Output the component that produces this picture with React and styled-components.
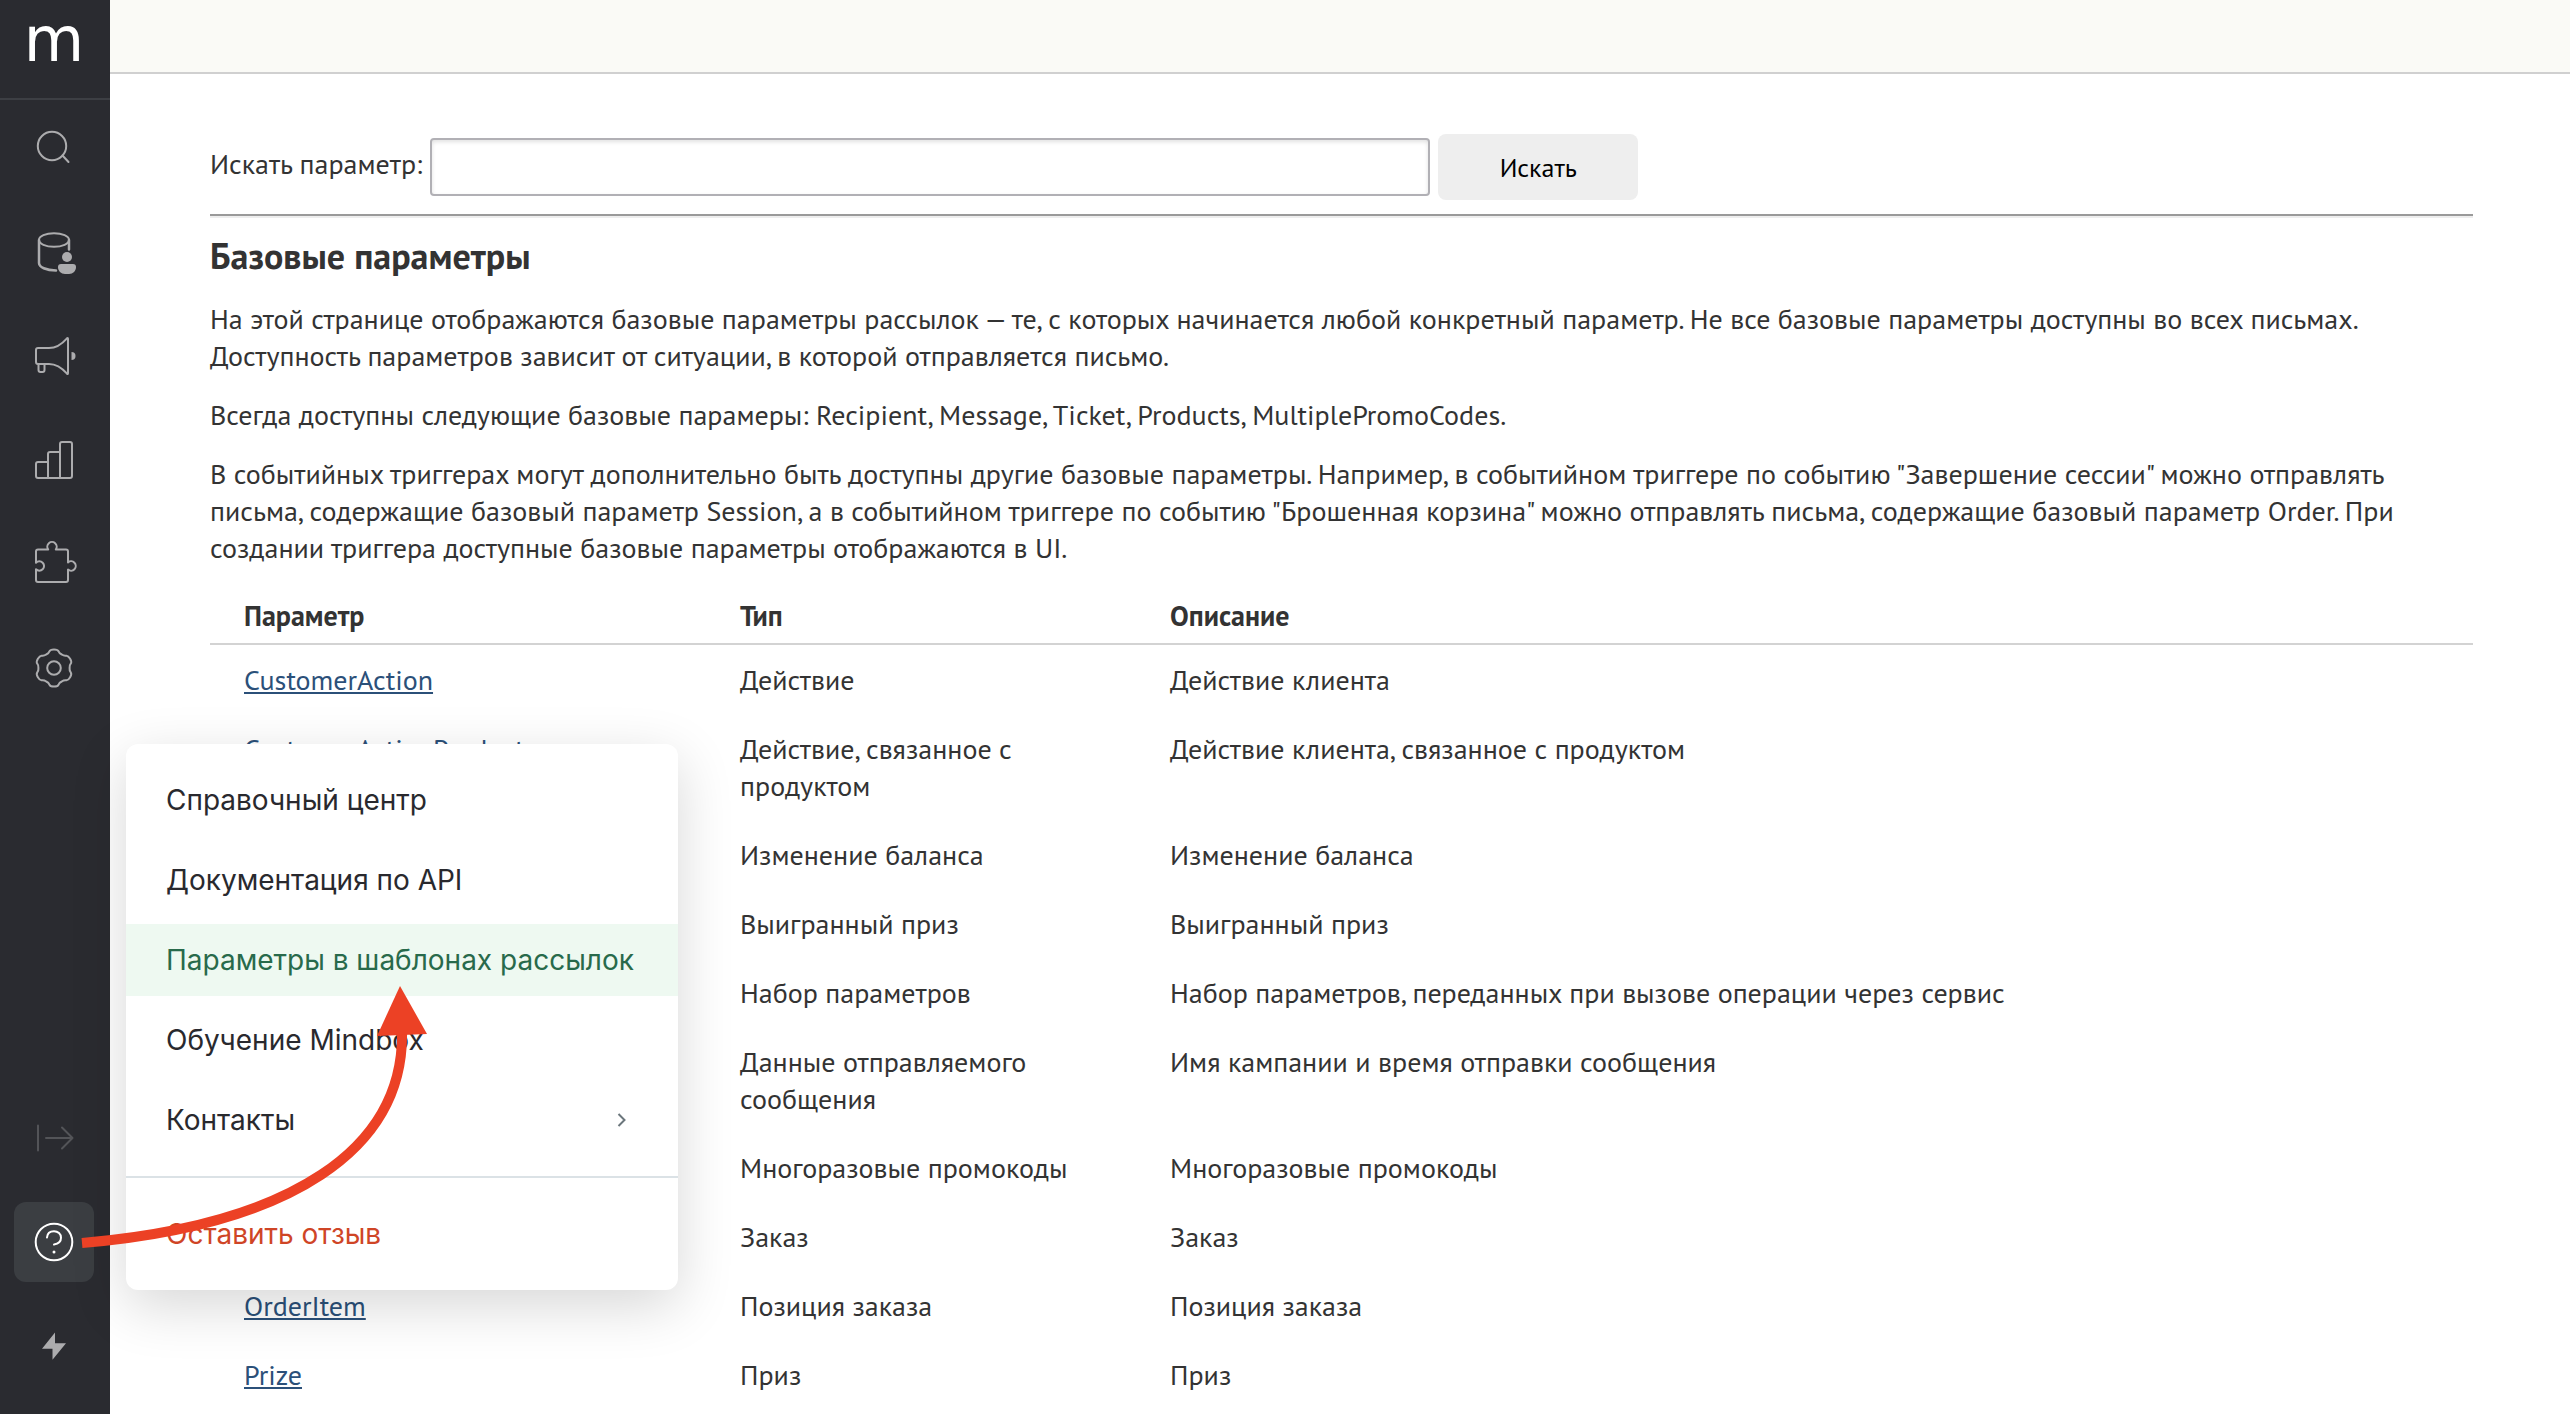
import React from 'react';
import { useState } from 'react';
import styled, { createGlobalStyle } from 'styled-components';

const GlobalStyle = createGlobalStyle`
    :root {
        --sidebar: #2a2b30;
        --sidebar-line: #3d3f44;
        --icon: #acacae;
        --text: #333;
        --menu-text: #29292e;
        --link: #2b5079;
        --pt: 'PT Sans', 'Noto Sans', sans-serif;
        --inter: Inter, 'Noto Sans', sans-serif;
    }

    *, *::before, *::after {
        box-sizing: border-box;
    }

    body {
        margin: 0;
        background: #fff;
        color: var(--text);
        font-family: var(--pt);
        font-size: 28px;
        line-height: 37px;
    }
`;

const StyledPage = styled.div`
    display: flex;
    align-items: flex-start;
    min-height: 100vh;
`;

const StyledSidebar = styled.aside`
    position: sticky;
    top: 0;
    z-index: 10;
    flex: none;
    display: flex;
    flex-direction: column;
    width: 110px;
    height: 100vh;
    background: var(--sidebar);
`;

const Logo = styled.a`
    height: 100px;
    padding-right: 2px;
    border-bottom: 2px solid var(--sidebar-line);
    color: #fff;
    font-family: 'DejaVu Sans', sans-serif;
    font-size: 62px;
    line-height: 79px;
    text-align: center;
    text-decoration: none;
`;

const NavGroup = styled.nav`
    display: flex;
    flex-direction: column;
    gap: 24px;
    padding: 8px 14px;

    &:last-of-type {
        margin-top: auto;
        padding-bottom: 28px;
    }
`;

const NavButton = styled.button`
    width: 80px;
    height: 80px;
    padding: 0;
    border: none;
    border-radius: 12px;
    background: ${({ $active }) => ($active ? '#3b3e42' : 'transparent')};
    color: ${({ $active, $dim }) => ($active ? '#fff' : $dim ? '#535458' : 'var(--icon)')};
    cursor: pointer;

    svg {
        display: block;
        width: 80px;
        height: 80px;
        fill: none;
        stroke: currentColor;
        stroke-width: 2;
        stroke-linejoin: round;
        stroke-linecap: round;
    }

    .solid {
        fill: currentColor;
        stroke: none;
    }
`;

const StyledMenu = styled.div`
    position: absolute;
    left: 126px;
    bottom: 124px;
    display: flex;
    flex-direction: column;
    gap: 8px;
    width: 552px;
    padding: 20px 0;
    border-radius: 12px;
    background: #fff;
    box-shadow: 0 16px 56px rgba(0, 0, 0, 0.16);

    hr {
        width: 100%;
        height: 2px;
        margin: 12px 0;
        border: none;
        background: #dbe2e6;
    }
`;

const MenuItem = styled.a`
    display: flex;
    align-items: center;
    justify-content: space-between;
    height: 72px;
    padding: 0 48px 0 40px;
    border: none;
    background: ${({ $active }) => ($active ? '#eef9f1' : 'transparent')};
    color: ${({ $active, $danger }) => ($active ? '#286a4b' : $danger ? '#cf4526' : 'var(--menu-text)')};
    font-family: var(--inter);
    font-size: 28px;
    text-align: left;
    text-decoration: none;
    white-space: nowrap;
    cursor: pointer;

    svg {
        width: 16px;
        height: 16px;
        fill: none;
        stroke: #6b767c;
        stroke-width: 2;
    }
`;

const Pointer = styled.svg`
    position: absolute;
    left: 80px;
    bottom: 154px;
    width: 360px;
    height: 280px;
    pointer-events: none;
`;

const StyledMain = styled.main`
    flex: 1;
    min-width: 0;
`;

const TopBar = styled.header`
    height: 74px;
    border-bottom: 2px solid #d0d0d0;
    background: #fafaf6;
`;

const Content = styled.div`
    padding: 60px 97px 0 100px;

    p {
        margin: 22px 0;
    }

    h1 {
        margin: 16px 0 22px;
        font-size: 36px;
        line-height: 44px;
    }
`;

const SearchForm = styled.form`
    display: flex;
    align-items: center;
    gap: 8px;

    label {
        padding-bottom: 8px;
    }

    input {
        flex: 0 1 1000px;
        min-width: 0;
        height: 58px;
        padding: 0 12px;
        border: 2px solid #b1b0b5;
        border-radius: 4px;
        box-shadow: inset 0 2px 4px rgba(0, 0, 0, 0.12);
        font: inherit;
    }

    button {
        width: 200px;
        height: 66px;
        border: none;
        border-radius: 8px;
        background: #eee;
        color: #000;
        font-family: var(--pt);
        font-size: 26px;
        cursor: pointer;
    }
`;

const Divider = styled.hr`
    height: 4px;
    margin: 14px 0 0;
    border: none;
    border-top: 2px solid #9a9a9a;
    background: #eee;
`;

const ParamTable = styled.table`
    width: 100%;
    border-collapse: collapse;
    table-layout: fixed;

    th {
        padding: 9px 34px;
        border-bottom: 2px solid #d3d3d3;
        text-align: left;
    }

    td {
        padding: 16px 34px;
        vertical-align: top;
    }

    a {
        color: var(--link);
    }

    .name {
        width: 496px;
    }

    .type {
        width: 430px;
    }
`;

// six-lobed gear outline around (40, 40)
const gearPath = () => {
    const at = (deg, r, shift) => {
        const a = (deg * Math.PI) / 180;
        const x = 40 + r * Math.cos(a) - shift * Math.sin(a);
        const y = 40 + r * Math.sin(a) + shift * Math.cos(a);
        return `${x.toFixed(2)} ${y.toFixed(2)}`;
    };
    let d = `M${at(-90, 18.6, 0)}`;
    for (let i = 0; i < 6; i++) {
        const peak = -90 + i * 60;
        d += `C${at(peak, 18.6, 7)} ${at(peak + 30, 15, -6)} ${at(peak + 30, 15.6, 0)}`;
        d += `C${at(peak + 30, 15, 6)} ${at(peak + 60, 18.6, -7)} ${at(peak + 60, 18.6, 0)}`;
    }
    return d + 'Z';
};

const topNav = [
    {
        label: 'Поиск',
        icon: <><circle cx="38" cy="38" r="14.2" /><path d="M48.5 47.5L54.5 54" /></>
    },
    {
        label: 'Клиенты',
        icon: (
            <>
                <ellipse cx="40" cy="28" rx="15" ry="6.8" />
                <path d="M25 28V51C25 55 32 58.5 42 58.5M55 28V37.5" strokeWidth="2.5" />
                <circle className="solid" cx="53" cy="45" r="5" />
                <path className="solid" d="M47 52H59Q62 52 62 55C62 59 59 62 55 62H51C47 62 44 59 44 55Q44 52 47 52Z" />
            </>
        )
    },
    {
        label: 'Кампании',
        icon: (
            <>
                <path d="M24 32H35C41 32 48 28 53 22.3Q54 21.3 54 23V57Q54 58.7 53 57.7C48 52 41 48 35 48H24Q22 48 22 46V34Q22 32 24 32Z" />
                <path d="M24.5 48V54Q24.5 56 26.5 56H28.5Q30.5 56 30.5 54V48" />
                <path className="solid" d="M57.5 36A4 4 0 0 1 57.5 44Z" />
            </>
        )
    },
    {
        label: 'Отчеты',
        icon: <path d="M34 58H24Q22 58 22 56V44Q22 42 24 42H34M46 58H34V34Q34 32 36 32H46M46 58V24Q46 22 48 22H56Q58 22 58 24V56Q58 58 56 58Z" />
    },
    {
        label: 'Интеграции',
        icon: <path d="M24 25.5H34.2A4.7 4.7 0 1 1 41.8 25.5H52Q54 25.5 54 27.5V38.4A4.7 4.7 0 1 1 54 45.6V56Q54 58 52 58H24Q22 58 22 56V45.3A4.7 4.7 0 1 0 22 38.7V27.5Q22 25.5 24 25.5Z" />
    },
    {
        label: 'Настройки',
        icon: <><path d={gearPath()} /><circle cx="40" cy="40" r="6.8" /></>
    }
];

const menuLinks = ['Справочный центр', 'Документация по API', 'Параметры в шаблонах рассылок', 'Обучение Mindbox'];

const params = [
    ['CustomerAction', 'Действие', 'Действие клиента'],
    ['CustomerActionProduct', 'Действие, связанное с продуктом', 'Действие клиента, связанное с продуктом'],
    ['BalanceChange', 'Изменение баланса', 'Изменение баланса'],
    ['CustomerPrize', 'Выигранный приз', 'Выигранный приз'],
    ['Parameters', 'Набор параметров', 'Набор параметров, переданных при вызове операции через сервис'],
    ['Message', 'Данные отправляемого сообщения', 'Имя кампании и время отправки сообщения'],
    ['PromoCodes', 'Многоразовые промокоды', 'Многоразовые промокоды'],
    ['Order', 'Заказ', 'Заказ'],
    ['OrderItem', 'Позиция заказа', 'Позиция заказа'],
    ['Prize', 'Приз', 'Приз']
];

const HelpMenu = () => {
  return (
    <StyledMenu>
        {menuLinks.map((text, index) => (
            <MenuItem key={text} href="#" $active={index === 2}>{text}</MenuItem>
        ))}
        <MenuItem as="button" type="button">
            Контакты
            <svg viewBox="0 0 16 16"><path d="M4.5 2L10.5 8L4.5 14" /></svg>
        </MenuItem>
        <hr />
        <MenuItem as="button" type="button" $danger>Оставить отзыв</MenuItem>
    </StyledMenu>
  )
}

const Sidebar = () => {
    const [helpOpen, setHelpOpen] = useState(true);

  return (
    <StyledSidebar>
        <Logo href="#">m</Logo>
        <NavGroup>
            {topNav.map(({ label, icon }) => (
                <NavButton key={label} type="button" aria-label={label}>
                    <svg viewBox="0 0 80 80">{icon}</svg>
                </NavButton>
            ))}
        </NavGroup>
        <NavGroup>
            <NavButton type="button" aria-label="Развернуть" $dim>
                <svg viewBox="0 0 80 80"><path d="M24 27.5V52.5M32 40H58.5M48 29.5L58.5 40L48 50.5" /></svg>
            </NavButton>
            <NavButton type="button" aria-label="Помощь" $active={helpOpen} onClick={() => setHelpOpen(!helpOpen)}>
                <svg viewBox="0 0 80 80">
                    <circle cx="40" cy="40" r="18.3" />
                    <path d="M33 35.5C33.3 31.7 36 29.3 40 29.3C44 29.3 47 32 47 35.7C47 39.5 44 41.8 40 42.5" />
                    <circle className="solid" cx="40" cy="50" r="1.5" />
                </svg>
            </NavButton>
            <NavButton type="button" aria-label="Быстрые действия">
                <svg viewBox="0 0 80 80"><path className="solid" d="M41 26.5L28 42.7H38.5V53.7L52 37.3H41Z" /></svg>
            </NavButton>
        </NavGroup>
        {helpOpen && (
            <>
                <HelpMenu />
                <Pointer viewBox="80 980 360 280">
                    <path d="M82 1243C290 1225 405 1150 402 1030" fill="none" stroke="#ec4125" strokeWidth="10" />
                    <path d="M400 986L427 1034L377 1036Z" fill="#ec4125" />
                </Pointer>
            </>
        )}
    </StyledSidebar>
  )
}

export default function App() {
  return (
    <StyledPage>
        <GlobalStyle />
        <Sidebar />
        <StyledMain>
            <TopBar />
            <Content>
                <SearchForm onSubmit={(e) => e.preventDefault()}>
                    <label htmlFor="param">Искать параметр:</label>
                    <input id="param" type="text" />
                    <button type="submit">Искать</button>
                </SearchForm>
                <Divider />
                <h1>Базовые параметры</h1>
                <p>На этой странице отображаются базовые параметры рассылок — те, с которых начинается любой конкретный параметр. Не все базовые параметры доступны во всех письмах. Доступность параметров зависит от ситуации, в которой отправляется письмо.</p>
                <p>Всегда доступны следующие базовые парамеры: Recipient, Message, Ticket, Products, MultiplePromoCodes.</p>
                <p>В событийных триггерах могут дополнительно быть доступны другие базовые параметры. Например, в событийном триггере по событию "Завершение сессии" можно отправлять письма, содержащие базовый параметр Session, а в событийном триггере по событию "Брошенная корзина" можно отправлять письма, содержащие базовый параметр Order. При создании триггера доступные базовые параметры отображаются в UI.</p>
                <ParamTable>
                    <thead>
                        <tr>
                            <th className="name">Параметр</th>
                            <th className="type">Тип</th>
                            <th>Описание</th>
                        </tr>
                    </thead>
                    <tbody>
                        {params.map(([name, type, info]) => (
                            <tr key={name}>
                                <td><a href="#">{name}</a></td>
                                <td>{type}</td>
                                <td>{info}</td>
                            </tr>
                        ))}
                    </tbody>
                </ParamTable>
            </Content>
        </StyledMain>
    </StyledPage>
  );
}
